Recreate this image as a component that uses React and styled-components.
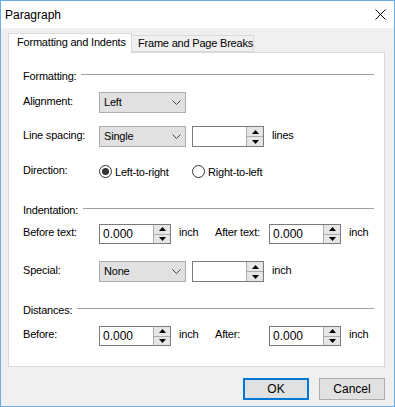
import React from 'react';
import styled, { createGlobalStyle } from 'styled-components';

const GlobalStyle = createGlobalStyle`
  html, body {
    margin: 0;
    padding: 0;
    background: #ffffff;
  }
  body {
    font-family: "Liberation Sans", Arial, sans-serif;
    font-size: 11px;
    letter-spacing: -0.2px;
    color: #000000;
  }
`;

const Window = styled.div`
  width: 395px;
  height: 407px;
  box-sizing: border-box;
  border: 1px solid #6aaee9;
  background: #f0f0f0;
  display: flex;
  flex-direction: column;
`;

const TitleBar = styled.div`
  height: 27px;
  background: #ffffff;
  display: flex;
  align-items: center;
  justify-content: space-between;
  padding: 0 8px 0 4px;
  font-size: 12px;
  letter-spacing: 0;
`;

const Body = styled.div`
  flex: 1;
  padding: 5px 8px 0 7px;
  display: flex;
  flex-direction: column;
`;

const TabStrip = styled.div`
  display: flex;
  align-items: flex-end;
  height: 19px;
  position: relative;
  z-index: 1;
`;

const Tab = styled.div`
  box-sizing: border-box;
  border: 1px solid #d9d9d9;
  border-bottom: ${p => (p.$active ? 'none' : '1px solid #d9d9d9')};
  background: ${p => (p.$active ? '#ffffff' : '#f0f0f0')};
  height: ${p => (p.$active ? '20px' : '17px')};
  margin-bottom: ${p => (p.$active ? '-1px' : '0')};
  margin-left: ${p => (p.$active ? '0' : '-1px')};
  width: ${p => p.$w}px;
  padding-left: ${p => (p.$active ? '8px' : '6px')};
  padding-top: ${p => (p.$active ? '2px' : '1px')};
  white-space: nowrap;
`;

const Panel = styled.div`
  box-sizing: border-box;
  width: 377px;
  height: 315px;
  background: #ffffff;
  border: 1px solid #d9d9d9;
  padding: 15px 10px 0 14px;
  display: flex;
  flex-direction: column;
`;

const GroupHead = styled.div`
  display: flex;
  align-items: center;
  height: 16px;
  margin-top: ${p => p.$mt || 0}px;
`;

const GroupLine = styled.div`
  flex: 1;
  height: 1px;
  background: #a0a0a0;
  margin-left: 5px;
  margin-bottom: 4px;
`;

const Row = styled.div`
  display: flex;
  align-items: center;
  height: ${p => p.$h || 21}px;
  margin-top: ${p => p.$mt || 0}px;
`;

const Label = styled.span`
  width: ${p => p.$w || 76}px;
  flex-shrink: 0;
  padding-bottom: 4px;
  white-space: nowrap;
`;

const Unit = styled.span`
  width: ${p => p.$w || 'auto'};
  margin-left: 8px;
  padding-bottom: 4px;
  white-space: nowrap;
`;

const Select = styled.div`
  box-sizing: border-box;
  width: 87px;
  height: 21px;
  background: #e1e1e1;
  border: 1px solid #adadad;
  display: flex;
  align-items: center;
  justify-content: space-between;
  padding: 0 4px 1px 4px;
`;

const SpinBox = styled.div`
  box-sizing: border-box;
  width: 72px;
  height: ${p => p.$h || 20}px;
  margin-left: ${p => p.$ml || 0}px;
  background: #ffffff;
  border: 1px solid #7a7a7a;
  display: flex;
`;

const SpinValue = styled.div`
  flex: 1;
  padding: 2px 0 0 3px;
  font-size: 12px;
  letter-spacing: 0;
`;

const SpinButtons = styled.div`
  width: 16px;
  display: flex;
  flex-direction: column;
  border-left: 1px solid #adadad;
`;

const SpinButton = styled.div`
  flex: 1;
  background: #e6e6e6;
  display: flex;
  align-items: center;
  justify-content: center;
  & + & {
    border-top: 1px solid #adadad;
  }
`;

const Radio = styled.label`
  display: flex;
  align-items: center;
  width: ${p => p.$w || 'auto'};
  padding-bottom: 1px;
`;

const RadioDot = styled.span`
  box-sizing: border-box;
  width: 13px;
  height: 13px;
  border-radius: 50%;
  border: 1px solid #333333;
  margin-right: 3px;
  display: flex;
  align-items: center;
  justify-content: center;
  &::after {
    content: '';
    display: ${p => (p.$on ? 'block' : 'none')};
    width: 7px;
    height: 7px;
    border-radius: 50%;
    background: #333333;
  }
`;

const ButtonRow = styled.div`
  display: flex;
  justify-content: flex-end;
  gap: 10px;
  margin-top: 11px;
  padding-right: 1px;
`;

const Button = styled.div`
  box-sizing: border-box;
  width: 66px;
  height: 22px;
  background: #e1e1e1;
  border: ${p => (p.$default ? '2px solid #0078d7' : '1px solid #adadad')};
  display: flex;
  align-items: center;
  justify-content: center;
  font-size: 12px;
  letter-spacing: 0;
`;

const Chevron = () => (
  <svg width="9" height="5" viewBox="0 0 9 5">
    <path d="M0.5 0.5 L4.5 4.5 L8.5 0.5" fill="none" stroke="#444" strokeWidth="1" />
  </svg>
);

const Arrow = ({ down }) => (
  <svg width="7" height="4" viewBox="0 0 7 4">
    {down
      ? <path d="M0 0 H7 L3.5 4 Z" fill="#000" />
      : <path d="M0 4 H7 L3.5 0 Z" fill="#000" />}
  </svg>
);

const Spin = ({ value, ml, h }) => (
  <SpinBox $ml={ml} $h={h}>
    <SpinValue>{value}</SpinValue>
    <SpinButtons>
      <SpinButton><Arrow /></SpinButton>
      <SpinButton><Arrow down /></SpinButton>
    </SpinButtons>
  </SpinBox>
);

const Dropdown = ({ value }) => (
  <Select>
    <span>{value}</span>
    <Chevron />
  </Select>
);

export default function App() {
  return (
    <>
      <GlobalStyle />
      <Window>
        <TitleBar>
          <span>Paragraph</span>
          <svg width="11" height="11" viewBox="0 0 11 11">
            <path d="M0.5 0.5 L10.5 10.5 M10.5 0.5 L0.5 10.5" stroke="#000" strokeWidth="1" />
          </svg>
        </TitleBar>
        <Body>
          <TabStrip>
            <Tab $active $w={124}>Formatting and Indents</Tab>
            <Tab $w={123}>Frame and Page Breaks</Tab>
          </TabStrip>
          <Panel>
            <GroupHead>Formatting:<GroupLine /></GroupHead>
            <Row $mt={8}>
              <Label>Alignment:</Label>
              <Dropdown value="Left" />
            </Row>
            <Row $mt={13}>
              <Label>Line spacing:</Label>
              <Dropdown value="Single" />
              <Spin ml={6} h={21} />
              <Unit>lines</Unit>
            </Row>
            <Row $mt={17} $h={16}>
              <Label>Direction:</Label>
              <Radio $w="93px"><RadioDot $on />Left-to-right</Radio>
              <Radio><RadioDot />Right-to-left</Radio>
            </Row>
            <GroupHead $mt={22}>Indentation:<GroupLine /></GroupHead>
            <Row $mt={6} $h={20}>
              <Label>Before text:</Label>
              <Spin value="0.000" />
              <Unit $w="36px">inch</Unit>
              <Label $w={54}>After text:</Label>
              <Spin value="0.000" />
              <Unit>inch</Unit>
            </Row>
            <Row $mt={17}>
              <Label>Special:</Label>
              <Dropdown value="None" />
              <Spin ml={6} h={21} />
              <Unit>inch</Unit>
            </Row>
            <GroupHead $mt={20}>Distances:<GroupLine /></GroupHead>
            <Row $mt={8} $h={20}>
              <Label>Before:</Label>
              <Spin value="0.000" />
              <Unit $w="36px">inch</Unit>
              <Label $w={54}>After:</Label>
              <Spin value="0.000" />
              <Unit>inch</Unit>
            </Row>
          </Panel>
          <ButtonRow>
            <Button $default>OK</Button>
            <Button>Cancel</Button>
          </ButtonRow>
        </Body>
      </Window>
    </>
  );
}
